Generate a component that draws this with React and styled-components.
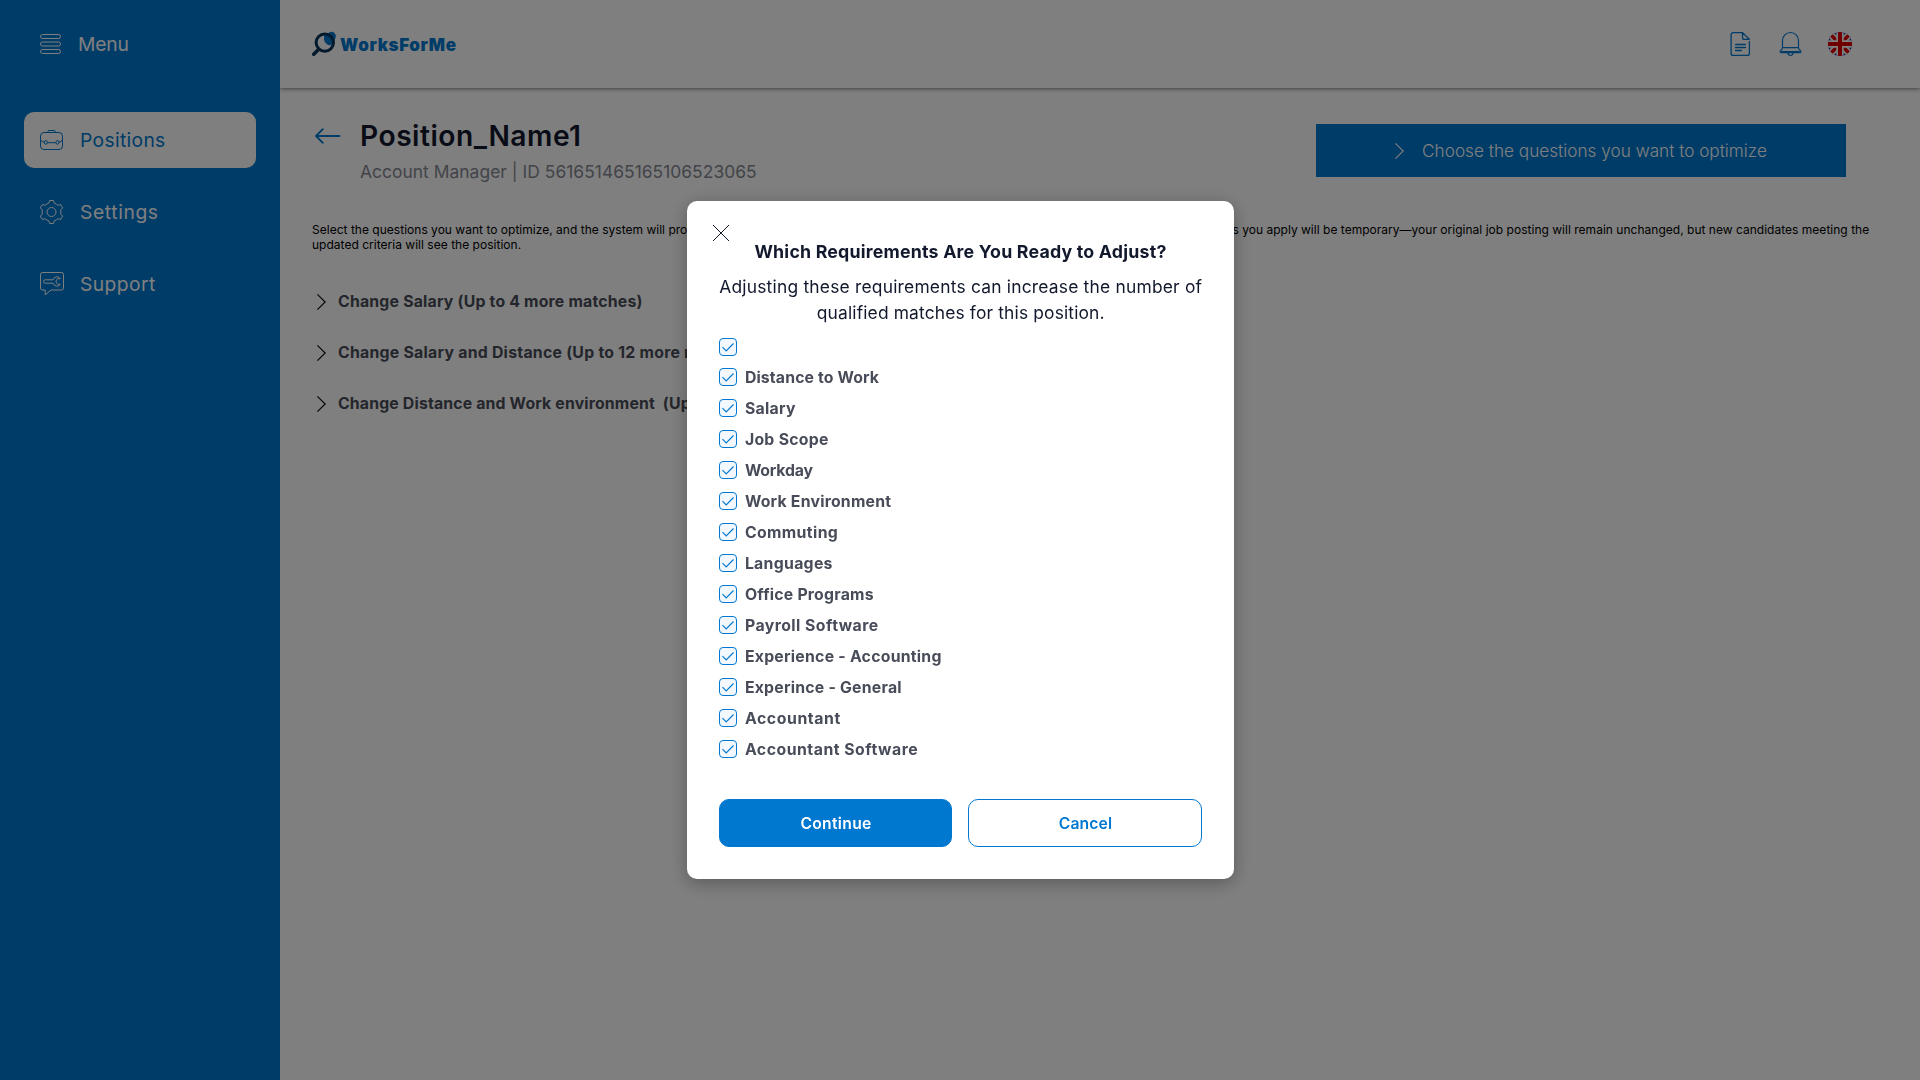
import React from 'react';
import styled, { createGlobalStyle } from 'styled-components';

const BLUE = '#0078d0';
const INK = '#12192d';
const SLATE = '#484c59';

const GlobalStyle = createGlobalStyle`
  *, *::before, *::after { box-sizing: border-box; }
  html, body { margin: 0; padding: 0; height: 100%; overflow: hidden; }
  body { font-family: Inter, "Noto Sans", sans-serif; background: #fff; }
  h1, h2, p, ul { margin: 0; padding: 0; }
  button { font-family: inherit; padding: 0; cursor: pointer; }
  svg { display: block; flex: none; overflow: visible; }
`;

const Layout = styled.div`
  display: grid;
  grid-template-columns: 280px 1fr;
  height: 100vh;
`;

const Spaced = styled.span`
  letter-spacing: ${(p) => p.$ls || 0}px;
  white-space: pre;
`;

/* Sidebar */
const Sidebar = styled.aside`
  background: ${BLUE};
  color: #fff;
  padding: 0 24px;
  position: relative;
  z-index: 1;
`;

const MenuToggle = styled.div`
  display: flex;
  align-items: center;
  gap: 17px;
  height: 88px;
  padding-left: 16px;
  font-size: 19.3px;
`;

const Nav = styled.nav`
  display: flex;
  flex-direction: column;
  gap: 16px;
  margin-top: 24px;
`;

const NavItem = styled.a`
  display: flex;
  align-items: center;
  gap: 16px;
  height: 56px;
  padding-left: 16px;
  border-radius: 10px;
  font-size: 19.3px;
  color: ${(p) => (p.$active ? BLUE : '#fff')};
  background: ${(p) => (p.$active ? '#fff' : 'transparent')};
`;

/* Main column */
const Main = styled.main`
  display: flex;
  flex-direction: column;
  min-width: 0;
`;

const TopBar = styled.header`
  display: flex;
  align-items: center;
  justify-content: space-between;
  height: 88px;
  padding: 0 68px 0 32px;
  box-shadow: 0 1px 4px rgba(0, 0, 0, 0.5);
`;

const Logo = styled.div`
  display: flex;
  align-items: center;
  gap: 4px;
  color: ${BLUE};
  font-size: 17px;
  font-weight: 900;
`;

const LogoText = styled(Spaced)`
  padding-top: 2px;
`;

const TopActions = styled.div`
  display: flex;
  align-items: center;
  gap: 26px;
`;

const Content = styled.section`
  padding: 32px 32px 0;
`;

const Heading = styled.div`
  display: flex;
  align-items: flex-start;
  padding-right: 42px;
  height: 102px;
`;

const BackLink = styled.a`
  width: 48px;
  padding: 8px 0 0 3px;
`;

const Titles = styled.div`
  flex: 1;
`;

const Title = styled.h1`
  font-size: 28.2px;
  font-weight: 600;
  line-height: 32px;
  color: ${INK};
`;

const Subtitle = styled.p`
  margin-top: 9px;
  font-size: 17.4px;
  line-height: 22px;
  color: #858993;
`;

const CallToAction = styled.button`
  display: flex;
  align-items: center;
  justify-content: center;
  gap: 18px;
  width: 530px;
  height: 53px;
  margin-top: 4px;
  border: 0;
  background: ${BLUE};
  color: #fff;
  font-size: 17.2px;
  font-weight: 300;
`;

const Description = styled.p`
  font-size: 12px;
  line-height: 15px;
  letter-spacing: 0.018px;
  color: #000;
`;

const Options = styled.ul`
  display: flex;
  flex-direction: column;
  gap: 32px;
  margin-top: 40px;
  list-style: none;
`;

const Option = styled.li`
  display: flex;
  align-items: center;
  gap: 12px;
  height: 19px;
  padding-left: 5px;
  font-size: 15.8px;
  font-weight: 700;
  color: ${SLATE};
`;

/* Dialog */
const Overlay = styled.div`
  position: fixed;
  inset: 0;
  z-index: 10;
  display: flex;
  align-items: center;
  justify-content: center;
  background: rgba(0, 0, 0, 0.5);
`;

const Dialog = styled.div`
  position: relative;
  width: 547px;
  padding: 40px 32px 32px;
  border-radius: 10px;
  background: #fff;
  box-shadow: 0 4px 18px rgba(0, 0, 0, 0.3);
`;

const CloseButton = styled.button`
  position: absolute;
  top: 24px;
  left: 26px;
  border: 0;
  background: none;
`;

const DialogTitle = styled.h2`
  padding-left: 1px;
  font-size: 17.8px;
  font-weight: 700;
  line-height: 21px;
  text-align: center;
  color: ${INK};
`;

const DialogText = styled.p`
  display: flex;
  flex-direction: column;
  align-items: center;
  margin: 12px -4px;
  padding-left: 1.5px;
  font-size: 17.4px;
  line-height: 26px;
  color: ${INK};
`;

const CheckList = styled.div`
  display: flex;
  flex-direction: column;
  gap: 12px;
`;

const CheckRow = styled.label`
  display: flex;
  align-items: flex-start;
  gap: 8.4px;
  font-size: 15.8px;
  font-weight: 700;
  line-height: 19px;
  color: ${SLATE};
`;

const CheckBox = styled.span`
  display: flex;
  align-items: center;
  justify-content: center;
  width: 18px;
  height: 18px;
  border: 1px solid ${BLUE};
  border-radius: 4px;
  background: #f2f8fe;
`;

const Buttons = styled.div`
  display: grid;
  grid-template-columns: 1fr 1fr;
  gap: 16px;
  margin-top: 40px;
`;

const Button = styled.button`
  height: 48px;
  padding-left: 1.5px;
  border: 1px solid ${BLUE};
  border-radius: 10px;
  background: ${(p) => (p.$primary ? BLUE : '#fff')};
  color: ${(p) => (p.$primary ? '#fff' : BLUE)};
  font-size: 15.7px;
  font-weight: 600;
`;

/* Icons */
const MenuIcon = () => (
  <svg width="21" height="20" fill="none" stroke="currentColor">
    <rect x=".5" y=".5" width="20" height="4" rx="2" />
    <rect x=".5" y="8" width="20" height="4" rx="2" />
    <rect x=".5" y="15.5" width="20" height="4" rx="2" />
  </svg>
);

const BriefcaseIcon = () => (
  <svg width="24" height="24" fill="none" stroke="currentColor" strokeWidth="1">
    <path d="M7.9 4.5V3.6Q7.9 2.5 9 2.5h5Q15.1 2.5 15.1 3.6v.9" />
    <rect x=".5" y="4.5" width="22" height="17" rx="3.5" />
    <path d="M.5 11.5q1 2.7 3.6 2.7M22.5 11.5q-1 2.7-3.6 2.7M7.4 14.7h8.2" />
    <ellipse cx="5.8" cy="14.4" rx="1.5" ry="1.8" />
    <ellipse cx="17.4" cy="14.4" rx="1.5" ry="1.8" />
  </svg>
);

const GearIcon = () => (
  <svg width="24" height="24" fill="none" stroke="currentColor" strokeWidth="1" strokeLinejoin="round">
    <path d="M9.6.5h3.8l.9 2.7q2 .6 3.5 2l2.9-.6 1.9 3.3-1.9 2q.4 2.1 0 4.2l1.9 2-1.9 3.3-2.9-.6q-1.5 1.4-3.5 2l-.9 2.7H9.6l-.9-2.7q-2-.6-3.5-2l-2.9.6-1.9-3.3 1.9-2q-.4-2.1 0-4.2l-1.9-2 1.9-3.3 2.9.6q1.5-1.4 3.5-2z" />
    <circle cx="11.5" cy="12" r="4.5" />
  </svg>
);

const SupportIcon = () => (
  <svg width="24" height="24" fill="none" stroke="currentColor" strokeWidth="1" strokeLinejoin="round">
    <path d="M2.5.5h19q2 0 2 2v13.500q0 2-2 2H11.200L5.200 22.800V18H2.500q-2 0-2-2V2.500q0-2 2-2z" />
    <path d="M20.300 6.600a4 4 0 0 0-7.200 1.200H5.200a1.700 1.700 0 0 0 0 3.400h7.900a4 4 0 0 0 7.200 1.200l-2.700-.2-1.400-1.400v-2.600l1.400-1.400z" />
  </svg>
);

const LogoMark = () => (
  <svg width="24" height="24" fill="none">
    <path d="M12.2 3.4L16.6 1Q20-1.500 22.700 1.300 25 4 22.800 7.600q-2 6-5.800 5.600-6.200-2.200-4.800-9.800z" fill={BLUE} />
    <circle cx="12.800" cy="10.600" r="8.700" stroke="#07345a" strokeWidth="3" />
    <path d="M6.800 17.200L1.700 22.200" stroke="#07345a" strokeWidth="3.600" strokeLinecap="round" />
  </svg>
);

const DocumentIcon = () => (
  <svg width="24" height="24" fill="none" stroke={BLUE} strokeWidth="1.300" strokeLinecap="round" strokeLinejoin="round">
    <path d="M14.500 .6H5.300Q3.100.6 3.100 2.800v18.400q0 2.200 2.200 2.200h13.900q2.200 0 2.200-2.200V9.500" />
    <path d="M14.500 .6v4.800q0 1.900 1.900 1.900h4.900zM7.500 12.500h10M7.500 15.500h10M7.500 18.500h6" />
  </svg>
);

const BellIcon = () => (
  <svg width="24" height="24" fill="none" stroke={BLUE} strokeWidth="1.200" strokeLinejoin="round">
    <path d="M4.500 15.700V8.500a8 8 0 0 1 16 0v7.200z" />
    <path d="M4.500 15.700Q4.300 17.800 2.500 18.600q-.9 1.600.4 2.100h19.200q1.300-.5.4-2.100-1.800-.8-2-2.900M3.300 19.700h18.400M9.700 20.700q.6 2.800 2.800 2.800t2.800-2.800" />
  </svg>
);

const FlagIcon = () => (
  <svg width="24" height="24">
    <defs>
      <clipPath id="flag-round"><circle cx="12" cy="12" r="12" /></clipPath>
    </defs>
    <g clipPath="url(#flag-round)">
      <path fill="#1c2a8c" d="M0 0h24v24H0z" />
      <path stroke="#fff" strokeWidth="7.200" d="M0 0l24 24M24 0L0 24" />
      <path stroke="#e00000" strokeWidth="3.600" d="M0 0l24 24M24 0L0 24" />
      <path stroke="#fff" strokeWidth="7.400" d="M12 0v24M0 12h24" />
      <path stroke="#e00000" strokeWidth="4" d="M12 0v24M0 12h24" />
    </g>
  </svg>
);

const ArrowLeft = () => (
  <svg width="26" height="16" fill="none" stroke={BLUE} strokeWidth="1.800" strokeLinecap="round" strokeLinejoin="round">
    <path d="M24.500 8H1M7.800 1.200L1 8l6.800 6.800" />
  </svg>
);

const Chevron = ({ color = '#000' }) => (
  <svg width="9" height="16" fill="none" stroke={color} strokeWidth="1.100">
    <path d="M.4.4L8.200 8 .4 15.600" />
  </svg>
);

const CloseIcon = () => (
  <svg width="16" height="16" fill="none" stroke={INK} strokeWidth="1">
    <path d="M0 0l16 16M16 0L0 16" />
  </svg>
);

const Tick = () => (
  <svg width="12" height="9" fill="none" stroke={BLUE} strokeWidth="1.100">
    <path d="M.5 4.200l3.700 3.700L11.500.5" />
  </svg>
);

const navItems = [
  { label: 'Positions', ls: 0.32, icon: <BriefcaseIcon />, active: true },
  { label: 'Settings', ls: 0.6, icon: <GearIcon /> },
  { label: 'Support', ls: 0.4, icon: <SupportIcon /> },
];

const options = [
  ['Change Salary (Up to 4 more matches)', 0.21],
  ['Change Salary and Distance (Up to 12 more matches)', 0.26],
  ['Change Distance and Work environment  (Up to 8 more matches)', 0.17],
];

const requirements = [
  ['', 0],
  ['Distance to Work', 0.14],
  ['Salary', 0.31],
  ['Job Scope', 0.28],
  ['Workday', -0.17],
  ['Work Environment', 0.22],
  ['Commuting', 0.38],
  ['Languages', 0.3],
  ['Office Programs', 0.22],
  ['Payroll Software', 0.46],
  ['Experience - Accounting', 0.25],
  ['Experince - General', 0.23],
  ['Accountant', 0.59],
  ['Accountant Software', 0.51],
];

export default function App() {
  return (
    <>
      <GlobalStyle />
      <Layout>
        <Sidebar>
          <MenuToggle>
            <MenuIcon />
            <Spaced $ls={-0.15}>Menu</Spaced>
          </MenuToggle>
          <Nav>
            {navItems.map((item) => (
              <NavItem key={item.label} $active={item.active}>
                {item.icon}
                <Spaced $ls={item.ls}>{item.label}</Spaced>
              </NavItem>
            ))}
          </Nav>
        </Sidebar>

        <Main>
          <TopBar>
            <Logo>
              <LogoMark />
              <LogoText $ls={0.6}>WorksForMe</LogoText>
            </Logo>
            <TopActions>
              <DocumentIcon />
              <BellIcon />
              <FlagIcon />
            </TopActions>
          </TopBar>

          <Content>
            <Heading>
              <BackLink><ArrowLeft /></BackLink>
              <Titles>
                <Title><Spaced $ls={0.5}>Position_Name1</Spaced></Title>
                <Subtitle><Spaced $ls={0.04}>Account Manager | ID 561651465165106523065</Spaced></Subtitle>
              </Titles>
              <CallToAction>
                <Chevron color="#fff" />
                <Spaced>Choose the questions you want to optimize</Spaced>
              </CallToAction>
            </Heading>

            <Description>
              Select the questions you want to optimize, and the system will provide suggestions to increase the number
              of relevant open matches for this position. Any changes you apply will be temporary—your original job
              posting will remain unchanged, but new candidates meeting the updated criteria will see the position.
            </Description>

            <Options>
              {options.map(([label, ls]) => (
                <Option key={label}>
                  <Chevron />
                  <Spaced $ls={ls}>{label}</Spaced>
                </Option>
              ))}
            </Options>
          </Content>
        </Main>
      </Layout>

      <Overlay>
        <Dialog role="dialog">
          <CloseButton aria-label="Close"><CloseIcon /></CloseButton>
          <DialogTitle><Spaced $ls={0.19}>Which Requirements Are You Ready to Adjust?</Spaced></DialogTitle>
          <DialogText>
            <Spaced $ls={0.21}>Adjusting these requirements can increase the number of</Spaced>
            <Spaced $ls={0.15}>qualified matches for this position.</Spaced>
          </DialogText>
          <CheckList>
            {requirements.map(([label, ls]) => (
              <CheckRow key={label}>
                <CheckBox><Tick /></CheckBox>
                {label && <Spaced $ls={ls}>{label}</Spaced>}
              </CheckRow>
            ))}
          </CheckList>
          <Buttons>
            <Button $primary><Spaced $ls={0.3}>Continue</Spaced></Button>
            <Button><Spaced $ls={0.15}>Cancel</Spaced></Button>
          </Buttons>
        </Dialog>
      </Overlay>
    </>
  );
}
